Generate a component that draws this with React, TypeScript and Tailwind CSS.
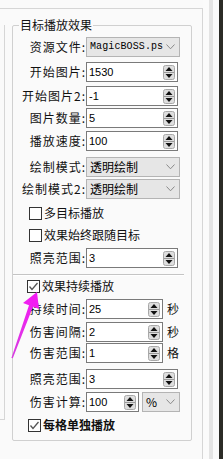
import React from "react";

const FONT = { fontFamily: '"Noto Sans CJK SC", "Noto Sans", sans-serif' } as const;

function Spinner() {
  return (
    <svg width="12" height="15" viewBox="0 0 12 15" className="shrink-0">
      <rect x="0.5" y="0.5" width="11" height="14" rx="2" fill="#dedede" stroke="#a8a8a8" />
      <line x1="1" y1="7.5" x2="11" y2="7.5" stroke="#9a9a9a" />
      <polygon points="6,2 9.5,6 2.5,6" fill="#111" />
      <polygon points="6,13 9.5,9 2.5,9" fill="#111" />
    </svg>
  );
}

function Chevron() {
  return (
    <svg width="9" height="6" viewBox="0 0 9 6" className="shrink-0">
      <polyline points="0.5,0.5 4.5,4.8 8.5,0.5" fill="none" stroke="#8a8a8a" strokeWidth="1" />
    </svg>
  );
}

function Spin({ value, w }: { value: string; w: string }) {
  return (
    <div className={`h-[20px] ${w} border border-[#7a7a7a] bg-white flex items-center pr-[2px]`}>
      <span className="flex-1 pl-[2px] text-[11px] leading-[14px] text-black" style={{ fontFamily: '"Liberation Sans", sans-serif' }}>
        {value}
      </span>
      <Spinner />
    </div>
  );
}

function Combo({ value, w, mono }: { value: string; w: string; mono?: boolean }) {
  return (
    <div className={`h-[20px] ${w} border border-[#b4b4b4] bg-[#e6e6e6] flex items-center pl-[3px] pr-[4px]`}>
      <span
        className={`flex-1 whitespace-nowrap ${mono ? "text-[10px] tracking-[0.1px]" : "text-[12px]"} leading-[16px] text-black`}
        style={mono ? { fontFamily: '"Liberation Mono", monospace' } : FONT}
      >
        {value}
      </span>
      <Chevron />
    </div>
  );
}

function Label({ text }: { text: string }) {
  return (
    <div className="w-[73px] shrink-0 text-right text-[12px] tracking-[1px] leading-[16px] text-[#111]" style={FONT}>
      {text}
    </div>
  );
}

function Check({ checked }: { checked?: boolean }) {
  return (
    <svg width="13" height="13" viewBox="0 0 13 13" className="shrink-0">
      <rect x="0.5" y="0.5" width="12" height="12" fill="#fff" stroke="#333" />
      {checked && <polyline points="2.5,6.5 5,9.5 10.5,3" fill="none" stroke="#555" strokeWidth="1.3" />}
    </svg>
  );
}

export default function App() {
  return (
    <div className="relative flex w-[223px] h-[459px] bg-[#fafafa] overflow-hidden" style={FONT}>
      {/* main panel */}
      <div className="w-[203px] flex flex-col">
        <div className="h-[8px]" />
        <div className="flex-1 flex border-t border-r border-[#d6d6d6]">
          <div className="w-[5px] mt-[16px] h-[395px] border-r border-b border-[#d6d6d6]" />
          <fieldset className="ml-[7px] mt-[8px] w-[180px] h-[424px] border border-[#d0d0d0] rounded-[2px] flex flex-col">
            <legend className="ml-[6px] px-[1px] text-[12px] leading-[16px] text-[#111]" style={FONT}>
              目标播放效果
            </legend>
            <div className="flex flex-col">
              <div className="mt-[4px] h-[20px] flex items-center">
                <Label text="资源文件:" />
                <Combo value="MagicBOSS.ps" w="w-[94px]" mono />
              </div>
              <div className="mt-[5px] h-[20px] flex items-center">
                <Label text="开始图片:" />
                <Spin value="1530" w="w-[92px]" />
              </div>
              <div className="mt-[4px] h-[20px] flex items-center">
                <Label text="开始图片2:" />
                <Spin value="-1" w="w-[92px]" />
              </div>
              <div className="mt-[2px] h-[20px] flex items-center">
                <Label text="图片数量:" />
                <Spin value="5" w="w-[92px]" />
              </div>
              <div className="mt-[3px] h-[20px] flex items-center">
                <Label text="播放速度:" />
                <Spin value="100" w="w-[92px]" />
              </div>
              <div className="mt-[6px] h-[20px] flex items-center">
                <Label text="绘制模式:" />
                <Combo value="透明绘制" w="w-[94px]" />
              </div>
              <div className="mt-[2px] h-[20px] flex items-center">
                <Label text="绘制模式2:" />
                <Combo value="透明绘制" w="w-[94px]" />
              </div>
              <div className="mt-[4px] h-[20px] flex items-center pl-[16px] gap-[2px]">
                <Check />
                <span className="text-[12px] leading-[16px] text-[#111]">多目标播放</span>
              </div>
              <div className="mt-[2px] h-[20px] flex items-center pl-[16px] gap-[2px]">
                <Check />
                <span className="text-[12px] leading-[16px] text-[#111]">效果始终跟随目标</span>
              </div>
              <div className="mt-[3px] h-[20px] flex items-center">
                <Label text="照亮范围:" />
                <Spin value="3" w="w-[92px]" />
              </div>
              <div className="mt-[6px] w-[171px] flex flex-col">
                <div className="h-px bg-[#c4c4c4]" />
                <div className="h-px bg-white" />
              </div>
              <div className="h-[20px] flex items-center pl-[14px] gap-[2px]">
                <Check checked />
                <span className="text-[12px] leading-[16px] text-[#111]">效果持续播放</span>
              </div>
              <div className="mt-[3px] h-[20px] flex items-center">
                <Label text="持续时间:" />
                <Spin value="25" w="w-[77px]" />
                <span className="ml-[4px] text-[12px] leading-[16px] text-[#111]">秒</span>
              </div>
              <div className="mt-[3px] h-[20px] flex items-center">
                <Label text="伤害间隔:" />
                <Spin value="2" w="w-[77px]" />
                <span className="ml-[4px] text-[12px] leading-[16px] text-[#111]">秒</span>
              </div>
              <div className="mt-[1px] h-[20px] flex items-center">
                <Label text="伤害范围:" />
                <Spin value="1" w="w-[77px]" />
                <span className="ml-[4px] text-[12px] leading-[16px] text-[#111]">格</span>
              </div>
              <div className="mt-[6px] h-[20px] flex items-center">
                <Label text="照亮范围:" />
                <Spin value="3" w="w-[92px]" />
              </div>
              <div className="mt-[3px] h-[20px] flex items-center">
                <Label text="伤害计算:" />
                <Spin value="100" w="w-[53px]" />
                <div className="ml-[3px]">
                  <Combo value="%" w="w-[38px]" />
                </div>
              </div>
              <div className="mt-[3px] h-[20px] flex items-center pl-[15px] gap-[2px]">
                <Check checked />
                <span className="text-[12px] leading-[16px] font-bold text-[#111]">每格单独播放</span>
              </div>
            </div>
          </fieldset>
        </div>
      </div>
      {/* right edge strips */}
      <div className="w-[6px] bg-[#fbfbfb]" />
      <div className="w-[4px] bg-[#e4e4e4]" />
      <div className="w-[6px] bg-[#fafafa]" />
      <div className="w-[4px] bg-[#2b2b26]" />

      {/* pink annotation arrow */}
      <svg className="absolute left-0 top-0 pointer-events-none" width="223" height="459" viewBox="0 0 223 459">
        <defs>
          <linearGradient id="ag" x1="0" y1="1" x2="0.4" y2="0">
            <stop offset="0" stopColor="#d63ee0" />
            <stop offset="1" stopColor="#f21cf2" />
          </linearGradient>
        </defs>
        <polygon
          points="37,292 23,303 29,305.3 11.4,358 12.8,358.3 33,306.7 39,309"
          fill="url(#ag)"
        />
      </svg>
    </div>
  );
}
